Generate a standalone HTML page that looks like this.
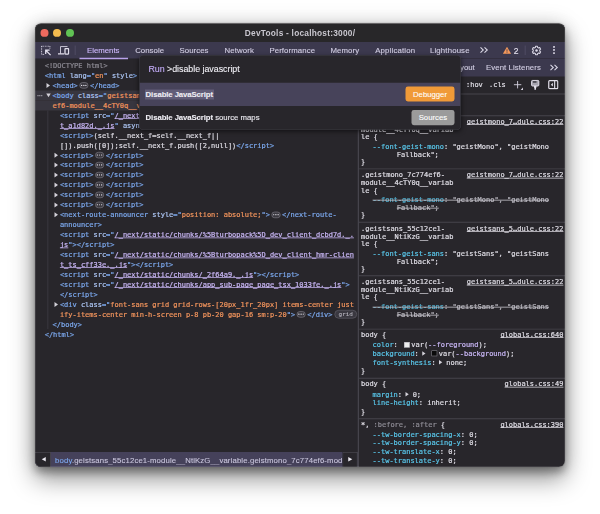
<!DOCTYPE html>
<html lang="en">
<head>
<meta charset="utf-8">
<title>DevTools - localhost:3000/</title>
<style>
html,body{margin:0;padding:0;}
body{width:600px;height:514px;background:#fff;position:relative;overflow:hidden;font-family:"Liberation Sans",sans-serif;}
.shadow{position:absolute;left:35px;top:23.5px;width:530px;height:443.6px;border-radius:6px;
  box-shadow:0 12px 24px 1px rgba(0,0,0,.38),0 5px 8px rgba(0,0,0,.32),0 0 1.5px rgba(0,0,0,.25),0 1px 22px rgba(0,0,0,.15);}
.win{position:absolute;left:35px;top:23.5px;width:530px;height:443.6px;border-radius:6px;overflow:hidden;background:#28262b;}
.abs{position:absolute;}
.win::after{content:"";position:absolute;left:0;top:0;right:0;bottom:0;border-radius:6px;box-shadow:inset 0 0 0 0.5px rgba(255,255,255,.22);pointer-events:none;z-index:10;}
.title{left:0;top:0;width:100%;height:18.5px;background:#282729;}
.title .t{position:absolute;left:0;width:100%;top:4.2px;text-align:center;color:#c9c7cf;font-weight:bold;font-size:8.3px;line-height:10px;letter-spacing:0.243px;}
.tl{position:absolute;top:5.45px;width:7.9px;height:7.9px;border-radius:50%;}
.tabbar{left:0;top:18.5px;width:100%;height:16.4px;background:#3c394e;}
.tab{position:absolute;top:3.7px;font-size:7.8px;line-height:9px;color:#d2cee3;white-space:pre;-webkit-text-stroke:0.12px;}
.mono{font-family:"DejaVu Sans Mono","Liberation Mono",monospace;font-size:6.98px;-webkit-text-stroke:0.22px;}
/* elements tree */
.tree{left:0;top:37.1px;width:322px;}
.row{height:9.95px;line-height:9.95px;position:relative;white-space:pre;}
.tg{color:#7aa6ea;}
.an{color:#a9c1ee;}
.av{color:#f0935c;}
.lk{color:#c6b4f2;text-decoration:underline;text-decoration-skip-ink:none;text-decoration-thickness:0.65px;text-underline-offset:0.45px;}
.tx{color:#dcdae2;}
.gy{color:#8b8992;}
.arr{position:absolute;top:2.5px;width:0;height:0;border-top:2.5px solid transparent;border-bottom:2.5px solid transparent;border-left:3.7px solid #d2d0d8;}
.arrd{position:absolute;top:3.1px;width:0;height:0;border-left:2.4px solid transparent;border-right:2.4px solid transparent;border-top:3.8px solid #d2d0d8;}
.pill{display:inline-block;vertical-align:middle;box-sizing:border-box;width:8.8px;height:6.2px;border-radius:3.1px;background:#3b3940;border:0.6px solid #908e98;margin:0 1.7px;position:relative;top:-0.3px;}
.pill i{position:absolute;top:1.9px;width:1.2px;height:1.2px;border-radius:50%;background:#e8e6ee;}
/* styles */
.sty{color:#dcdae2;}
.sl{position:absolute;line-height:8.14px;height:8.14px;}
.pn{color:#58c3e6;}
.src{color:#dcdae2;text-decoration:underline;text-decoration-skip-ink:none;text-decoration-thickness:0.65px;text-underline-offset:0.45px;}
.sep{position:absolute;left:323px;width:207px;height:0.9px;background:#46444c;margin-top:0.2px;}
.strike{position:absolute;height:0.7px;background:#cfcdd5;}
.st{text-decoration:line-through;text-decoration-color:#cfcdd5;text-decoration-thickness:0.7px;color:#b4b2ba;}
.st .pn{color:#4fa9c8;}
.sl{white-space:pre;}
.vr{color:#c6b4f2;}
.sw{display:inline-block;box-sizing:border-box;width:5.6px;height:5.6px;border:0.6px solid #9a98a2;vertical-align:middle;margin:0 1.6px 0 2.1px;position:relative;top:-0.4px;}
.ex{display:inline-block;width:0;height:0;border-top:2.3px solid transparent;border-bottom:2.3px solid transparent;border-left:3.4px solid #d4d2da;margin-left:-0.8px;margin-right:-0.2px;vertical-align:middle;position:relative;top:-0.4px;}
.gridb{display:inline-block;box-sizing:border-box;vertical-align:middle;margin-left:2px;width:22.4px;text-align:center;height:8.4px;line-height:7.9px;font-size:6px;-webkit-text-stroke:0.05px;border-radius:4.2px;background:#3a3840;border:0.65px solid #6e6c76;color:#bfbdc6;position:relative;top:-0.4px;}
.menu{left:104.6px;top:32px;width:320.8px;height:74px;background:#28262b;border-radius:4px;overflow:hidden;box-shadow:0 0 0 0.5px #45434c,0 1.5px 5px rgba(0,0,0,.6);}
.mi{font-size:7.75px;line-height:9px;color:#efeef4;white-space:pre;-webkit-text-stroke:0.1px;}
.mi b,.mi[style*="bold"]{letter-spacing:-0.085px;}
.badge{height:15.2px;line-height:15.2px;border-radius:2.4px;text-align:center;color:#fff;font-size:7.75px;-webkit-text-stroke:0.1px;}
#sc{position:absolute;left:0;top:0;width:2400px;height:2056px;transform:scale(.25);transform-origin:0 0;}
#zm{zoom:4;position:absolute;left:0;top:0;width:600px;height:514px;}
</style>
</head>
<body>
<div id="sc"><div id="zm">
<div class="shadow"></div>
<div class="win">
  <!-- title bar -->
  <div class="abs title">
    <div class="tl" style="left:5.55px;background:#ee6a5e;"></div>
    <div class="tl" style="left:18.05px;background:#f5bd4f;"></div>
    <div class="tl" style="left:31px;background:#61c354;"></div>
    <div class="t">DevTools - localhost:3000/</div>
  </div>
  <!-- tab bar -->
  <div class="abs tabbar">
    <svg class="abs" style="left:6px;top:3.6px" width="10.5" height="10.5" viewBox="0 0 10.5 10.5"><path d="M0.6 0.6H8.9V3.2M0.6 0.6V8.9H3.2" fill="none" stroke="#dcd9e8" stroke-width="1" stroke-dasharray="0.9 0.75"/><path d="M4.7 8.6V4.7H8.6M4.9 4.9L9.6 9.6" fill="none" stroke="#e4e1ee" stroke-width="1.25"/><path d="M4.7 4.7H7.6L4.7 7.6Z" fill="#e4e1ee" opacity=".55"/></svg>
    <svg class="abs" style="left:22.6px;top:3.7px" width="12" height="10" viewBox="0 0 12 10"><path d="M3 8V0.8H10" fill="none" stroke="#d6d3e2" stroke-width="0.9"/><path d="M0.5 8.1H6.8" stroke="#e0ddea" stroke-width="1.3"/><rect x="7.5" y="2.9" width="3.6" height="5.4" rx="0.5" fill="none" stroke="#e0ddea" stroke-width="1.3"/></svg>
    <div class="abs" style="left:39.8px;top:3.5px;width:0.6px;height:9.5px;background:#55526a;"></div>
    <div class="tab" style="left:52.0px;color:#cdb8fb;">Elements</div>
    <div class="abs" style="left:44.4px;top:15.8px;width:48.6px;height:1.4px;background:#b9a3ea;z-index:3;"></div>
    <div class="tab" style="left:100.2px;letter-spacing:.03px">Console</div>
    <div class="tab" style="left:144.6px;letter-spacing:.05px">Sources</div>
    <div class="tab" style="left:189.4px;letter-spacing:.14px">Network</div>
    <div class="tab" style="left:234.4px;letter-spacing:.1px">Performance</div>
    <div class="tab" style="left:295.5px;letter-spacing:.09px">Memory</div>
    <div class="tab" style="left:340.2px;letter-spacing:.17px">Application</div>
    <div class="tab" style="left:395.0px;letter-spacing:.15px">Lighthouse</div>
    <svg class="abs" style="left:444.6px;top:4.6px" width="9" height="7" viewBox="0 0 9 7"><path d="M1 0.8L3.8 3.5L1 6.2M5 0.8L7.8 3.5L5 6.2" fill="none" stroke="#dcd9e8" stroke-width="1.05"/></svg>
    <svg class="abs" style="left:467.6px;top:4.3px" width="9" height="8" viewBox="0 0 9 8"><path d="M4.5 0.5L8.6 7.5H0.4Z" fill="#f4985a"/><rect x="4.1" y="3" width="0.8" height="2.4" fill="#3c394e"/><rect x="4.1" y="6" width="0.8" height="0.8" fill="#3c394e"/></svg>
    <div class="tab" style="left:478.8px;top:4.3px;color:#e8e5f2;font-size:8.5px;">2</div>
    <div class="abs" style="left:489.8px;top:3.5px;width:0.6px;height:9.5px;background:#55526a;"></div>
    <svg class="abs" style="left:495.9px;top:2.9px" width="11" height="11" viewBox="0 0 11 11"><path d="M4.43 2.38L4.60 1.25L6.40 1.25L6.57 2.38L7.66 3.01L8.73 2.59L9.64 4.16L8.74 4.87L8.74 6.13L9.64 6.84L8.73 8.41L7.66 7.99L6.57 8.62L6.40 9.75L4.60 9.75L4.43 8.62L3.34 7.99L2.27 8.41L1.36 6.84L2.26 6.13L2.26 4.87L1.36 4.16L2.27 2.59L3.34 3.01Z" fill="none" stroke="#dedbe9" stroke-width="1.05" stroke-linejoin="round"/><circle cx="5.5" cy="5.5" r="1.25" fill="#dedbe9"/></svg>
    <div class="abs" style="left:518.1px;top:3.9px;width:1.8px;height:1.8px;border-radius:50%;background:#e0ddea;box-shadow:0 3.1px 0 #e0ddea,0 6.2px 0 #e0ddea;"></div>
  </div>
  <div class="abs" style="left:0;top:34.9px;width:100%;height:0.6px;background:#2f2d3a;"></div>
  <div class="abs" style="left:12.6px;top:87px;width:0.7px;height:218.5px;background:#3f3d46;"></div>
  <!-- elements tree -->
  <div class="abs tree mono">
    <div class="row" style="padding-left:9.7px;"><span class="gy">&lt;!DOCTYPE html&gt;</span></div>
    <div class="row" style="padding-left:9.7px;"><span class="tg">&lt;html</span> <span class="an">lang</span><span class="tg">="</span><span class="av">en</span><span class="tg">"</span> <span class="an">style</span><span class="tg">&gt;</span></div>
    <div class="row" style="padding-left:17.6px;"><span class="arr" style="left:11.6px"></span><span class="tg">&lt;head&gt;</span><span class="pill"><i style="left:1.05px"></i><i style="left:3.2px"></i><i style="left:5.35px"></i></span><span class="tg">&lt;/head&gt;</span></div>
    <div class="row" style="padding-left:17.6px;background:#38363f;"><span class="abs" style="left:2.4px;top:4.5px;width:1.2px;height:1.2px;border-radius:50%;background:#cccad4;box-shadow:1.9px 0 0 #cccad4,3.8px 0 0 #cccad4;"></span><span class="arrd" style="left:11.2px"></span><span class="tg">&lt;body</span> <span class="an">class</span><span class="tg">="</span><span class="av">geistsans_55c12ce1-module__NtiKzG__variable geistmono_7c774</span></div>
    <div class="row" style="padding-left:17.6px;background:#38363f;"><span class="av">ef6-module__4cTY0q__variable antialiased</span><span class="tg">"&gt;</span> <span class="gy">== $0</span></div>
    <div class="row" style="padding-left:24.9px;"><span class="tg">&lt;script</span> <span class="an">src</span><span class="tg">="</span><span class="lk">/_next/static/chunks/%5Bturbopack%5D_browser_dev_hmr-clien</span></div>
    <div class="row" style="padding-left:24.9px;"><span class="lk">t_a1d82d._.js</span><span class="tg">"</span> <span class="an">async</span><span class="tg">&gt;&lt;/script&gt;</span></div>
    <div class="row" style="padding-left:24.9px;"><span class="tg">&lt;script&gt;</span><span class="tx">(self.__next_f=self.__next_f||</span></div>
    <div class="row" style="padding-left:24.9px;"><span class="tx">[]).push([0]);self.__next_f.push([2,null])</span><span class="tg">&lt;/script&gt;</span></div>
    <div class="row" style="padding-left:24.9px;"><span class="arr" style="left:19.4px"></span><span class="tg">&lt;script&gt;</span><span class="pill"><i style="left:1.05px"></i><i style="left:3.2px"></i><i style="left:5.35px"></i></span><span class="tg">&lt;/script&gt;</span></div>
    <div class="row" style="padding-left:24.9px;"><span class="arr" style="left:19.4px"></span><span class="tg">&lt;script&gt;</span><span class="pill"><i style="left:1.05px"></i><i style="left:3.2px"></i><i style="left:5.35px"></i></span><span class="tg">&lt;/script&gt;</span></div>
    <div class="row" style="padding-left:24.9px;"><span class="arr" style="left:19.4px"></span><span class="tg">&lt;script&gt;</span><span class="pill"><i style="left:1.05px"></i><i style="left:3.2px"></i><i style="left:5.35px"></i></span><span class="tg">&lt;/script&gt;</span></div>
    <div class="row" style="padding-left:24.9px;"><span class="arr" style="left:19.4px"></span><span class="tg">&lt;script&gt;</span><span class="pill"><i style="left:1.05px"></i><i style="left:3.2px"></i><i style="left:5.35px"></i></span><span class="tg">&lt;/script&gt;</span></div>
    <div class="row" style="padding-left:24.9px;"><span class="arr" style="left:19.4px"></span><span class="tg">&lt;script&gt;</span><span class="pill"><i style="left:1.05px"></i><i style="left:3.2px"></i><i style="left:5.35px"></i></span><span class="tg">&lt;/script&gt;</span></div>
    <div class="row" style="padding-left:24.9px;"><span class="arr" style="left:19.4px"></span><span class="tg">&lt;script&gt;</span><span class="pill"><i style="left:1.05px"></i><i style="left:3.2px"></i><i style="left:5.35px"></i></span><span class="tg">&lt;/script&gt;</span></div>
    <div class="row" style="padding-left:24.9px;"><span class="arr" style="left:19.4px"></span><span class="tg">&lt;next-route-announcer</span> <span class="an">style</span><span class="tg">="</span><span class="av">position: absolute;</span><span class="tg">"&gt;</span><span class="pill"><i style="left:1.05px"></i><i style="left:3.2px"></i><i style="left:5.35px"></i></span><span class="tg">&lt;/next-route-</span></div>
    <div class="row" style="padding-left:24.9px;"><span class="tg">announcer&gt;</span></div>
    <div class="row" style="padding-left:24.9px;"><span class="tg">&lt;script</span> <span class="an">src</span><span class="tg">="</span><span class="lk">/_next/static/chunks/%5Bturbopack%5D_dev_client_dcbd7d._.</span></div>
    <div class="row" style="padding-left:24.9px;"><span class="lk">js</span><span class="tg">"&gt;&lt;/script&gt;</span></div>
    <div class="row" style="padding-left:24.9px;"><span class="tg">&lt;script</span> <span class="an">src</span><span class="tg">="</span><span class="lk">/_next/static/chunks/%5Bturbopack%5D_dev_client_hmr-clien</span></div>
    <div class="row" style="padding-left:24.9px;"><span class="lk">t_ts_cff33e._.js</span><span class="tg">"&gt;&lt;/script&gt;</span></div>
    <div class="row" style="padding-left:24.9px;"><span class="tg">&lt;script</span> <span class="an">src</span><span class="tg">="</span><span class="lk">/_next/static/chunks/_2f64a9._.js</span><span class="tg">"&gt;&lt;/script&gt;</span></div>
    <div class="row" style="padding-left:24.9px;"><span class="tg">&lt;script</span> <span class="an">src</span><span class="tg">="</span><span class="lk">/_next/static/chunks/app_sub-page_page_tsx_1033fe._.js</span><span class="tg">"&gt;</span></div>
    <div class="row" style="padding-left:24.9px;"><span class="tg">&lt;/script&gt;</span></div>
    <div class="row" style="padding-left:24.9px;"><span class="arr" style="left:19.4px"></span><span class="tg">&lt;div</span> <span class="an">class</span><span class="tg">="</span><span class="av">font-sans grid grid-rows-[20px_1fr_20px] items-center just</span></div>
    <div class="row" style="padding-left:24.9px;"><span class="av">ify-items-center min-h-screen p-8 pb-20 gap-16 sm:p-20</span><span class="tg">"&gt;</span><span class="pill"><i style="left:1.05px"></i><i style="left:3.2px"></i><i style="left:5.35px"></i></span><span class="tg">&lt;/div&gt;</span><span class="gridb">grid</span></div>
    <div class="row" style="padding-left:17.6px;"><span class="tg">&lt;/body&gt;</span></div>
    <div class="row" style="padding-left:9.7px;"><span class="tg">&lt;/html&gt;</span></div>
  </div>
  <!-- right: styles pane -->
  <div class="abs" style="left:322.8px;top:35px;width:1.1px;height:410px;background:#46444c;"></div>
  <div class="abs" style="left:323px;top:35.2px;width:207px;height:17.7px;background:#3c394e;"></div>
  <div class="tab" style="left:425px;top:39.8px;">yout</div>
  <div class="tab" style="left:451px;top:39.8px;letter-spacing:.08px">Event Listeners</div>
  <svg class="abs" style="left:514.6px;top:40.6px" width="9" height="7" viewBox="0 0 9 7"><path d="M1 0.8L3.8 3.5L1 6.2M5 0.8L7.8 3.5L5 6.2" fill="none" stroke="#dcd9e8" stroke-width="1.05"/></svg>
  <div class="abs mono" style="left:431px;top:57.4px;line-height:8.14px;color:#dcdae2;white-space:pre;">:hov</div>
  <div class="abs mono" style="left:454px;top:57.4px;line-height:8.14px;color:#dcdae2;white-space:pre;">.cls</div>
  <svg class="abs" style="left:478px;top:56.5px" width="11" height="11" viewBox="0 0 11 11"><path d="M4.6 1V8.4M0.9 4.7H8.3" fill="none" stroke="#d6d3e2" stroke-width="0.9"/><path d="M10 7.6V10H7.6Z" fill="#d6d3e2"/></svg>
  <svg class="abs" style="left:495.6px;top:56px" width="10" height="11" viewBox="0 0 10 11"><rect x="1.1" y="0.9" width="7.2" height="5.6" rx="0.9" fill="#a5a3ae" stroke="#e2dfea" stroke-width="1"/><rect x="2.4" y="1.7" width="3.6" height="1.5" fill="#3a3840"/><path d="M3.5 6.5H5.9V8.2H5.5V10.2H3.9V8.2H3.5Z" fill="#e2dfea"/></svg>
  <svg class="abs" style="left:512.8px;top:56.2px" width="11" height="10" viewBox="0 0 11 10"><rect x="1" y="0.9" width="9" height="8" rx="0.9" fill="none" stroke="#e2dfea" stroke-width="1.2"/><path d="M6.9 0.9V8.9" stroke="#e2dfea" stroke-width="1.1"/><path d="M5.1 3.1V6.7L3.1 4.9Z" fill="#e2dfea"/></svg>
  <div class="sep" style="top:69.9px"></div>
  <div class="mono">
    <div class="sep" style="top:91.55px"></div>
    <div class="sl sty" style="left:326.0px;top:93.93px">.geistmono_7c774ef6-</div>
    <div class="sl src" style="right:1.6px;top:93.93px">geistmono_7…dule.css:22</div>
    <div class="sl sty" style="left:326.0px;top:101.93px">module__4cTY0q__variab</div>
    <div class="sl sty" style="left:326.0px;top:109.13px">le {</div>
    <div class="sl sty" style="left:337.6px;top:118.93px"><span class="pn">--font-geist-mono</span>: "geistMono", "geistMono</div>
    <div class="sl sty" style="left:361.8px;top:126.93px">Fallback";</div>
    <div class="sl sty" style="left:326.0px;top:133.63px">}</div>
    <div class="sep" style="top:144.75px"></div>
    <div class="sl sty" style="left:326.0px;top:147.43px">.geistmono_7c774ef6-</div>
    <div class="sl src" style="right:1.6px;top:147.43px">geistmono_7…dule.css:22</div>
    <div class="sl sty" style="left:326.0px;top:155.43px">module__4cTY0q__variab</div>
    <div class="sl sty" style="left:326.0px;top:162.63px">le {</div>
    <div class="sl sty" style="left:337.6px;top:172.43px"><span class="st"><span class="pn">--font-geist-mono</span>: "geistMono", "geistMono</span></div>
    <div class="sl sty" style="left:361.8px;top:180.43px"><span class="st">Fallback";</span></div>
    <div class="sl sty" style="left:326.0px;top:187.13px">}</div>
    <div class="sep" style="top:198.15px"></div>
    <div class="sl sty" style="left:326.0px;top:200.93px">.geistsans_55c12ce1-</div>
    <div class="sl src" style="right:1.6px;top:200.93px">geistsans_5…dule.css:22</div>
    <div class="sl sty" style="left:326.0px;top:208.93px">module__NtiKzG__variab</div>
    <div class="sl sty" style="left:326.0px;top:216.13px">le {</div>
    <div class="sl sty" style="left:337.6px;top:225.93px"><span class="pn">--font-geist-sans</span>: "geistSans", "geistSans</div>
    <div class="sl sty" style="left:361.8px;top:233.93px">Fallback";</div>
    <div class="sl sty" style="left:326.0px;top:240.63px">}</div>
    <div class="sep" style="top:251.65px"></div>
    <div class="sl sty" style="left:326.0px;top:254.43px">.geistsans_55c12ce1-</div>
    <div class="sl src" style="right:1.6px;top:254.43px">geistsans_5…dule.css:22</div>
    <div class="sl sty" style="left:326.0px;top:262.43px">module__NtiKzG__variab</div>
    <div class="sl sty" style="left:326.0px;top:268.93px">le {</div>
    <div class="sl sty" style="left:337.6px;top:279.43px"><span class="st"><span class="pn">--font-geist-sans</span>: "geistSans", "geistSans</span></div>
    <div class="sl sty" style="left:361.8px;top:287.43px"><span class="st">Fallback";</span></div>
    <div class="sl sty" style="left:326.0px;top:294.13px">}</div>
    <div class="sep" style="top:304.95px"></div>
    <div class="sl sty" style="left:326.0px;top:307.03px">body {</div>
    <div class="sl src" style="right:1.6px;top:307.03px">globals.css:640</div>
    <div class="sl sty" style="left:337.6px;top:317.43px"><span class="pn">color</span>: <span class="sw" style="background:#ededed"></span>var(<span class="vr">--foreground</span>);</div>
    <div class="sl sty" style="left:337.6px;top:326.03px"><span class="pn">background</span>: <span class="ex"></span> <span class="sw" style="background:#0a0a0a"></span>var(<span class="vr">--background</span>);</div>
    <div class="sl sty" style="left:337.6px;top:334.83px"><span class="pn">font-synthesis</span>: <span class="ex"></span> none;</div>
    <div class="sl sty" style="left:326.0px;top:343.43px">}</div>
    <div class="sep" style="top:354.15px"></div>
    <div class="sl sty" style="left:326.0px;top:356.43px">body {</div>
    <div class="sl src" style="right:1.6px;top:356.43px">globals.css:49</div>
    <div class="sl sty" style="left:337.6px;top:366.83px"><span class="pn">margin</span>: <span class="ex"></span> 0;</div>
    <div class="sl sty" style="left:337.6px;top:375.43px"><span class="pn">line-height</span>: inherit;</div>
    <div class="sl sty" style="left:326.0px;top:383.83px">}</div>
    <div class="sep" style="top:394.55px"></div>
    <div class="sl sty" style="left:326.0px;top:397.03px">*, <span class="gy">:before, :after</span> {</div>
    <div class="sl src" style="right:1.6px;top:397.03px">globals.css:390</div>
    <div class="sl sty" style="left:337.6px;top:406.83px"><span class="pn">--tw-border-spacing-x</span>: 0;</div>
    <div class="sl sty" style="left:337.6px;top:415.43px"><span class="pn">--tw-border-spacing-y</span>: 0;</div>
    <div class="sl sty" style="left:337.6px;top:424.43px"><span class="pn">--tw-translate-x</span>: 0;</div>
    <div class="sl sty" style="left:337.6px;top:433.03px"><span class="pn">--tw-translate-y</span>: 0;</div>
  </div>
  <!-- breadcrumbs -->
  <div class="abs" style="left:0;top:428.4px;width:322.4px;height:16px;background:#45415a;"></div>
  <div class="abs" style="left:0;top:428.4px;width:15.8px;height:16px;background:#28262b;box-shadow:inset -0.6px 0.6px 0 0 #55535d;"></div>
  <div class="abs" style="left:6.7px;top:433.5px;width:0;height:0;border-top:2.35px solid transparent;border-bottom:2.35px solid transparent;border-right:4px solid #eceaf2;"></div>
  <div class="abs" style="left:20.1px;top:432.2px;font-size:7.75px;line-height:9px;color:#cbc7de;white-space:pre;width:287px;overflow:hidden;letter-spacing:.137px;-webkit-text-stroke:0.1px;"><span style="color:#7eaaf2">body</span>.geistsans_55c12ce1-module__NtiKzG__variable.geistmono_7c774ef6-module__4cTY0q__variable.antialiased</div>
  <div class="abs" style="left:307.4px;top:428.4px;width:15px;height:16px;background:#28262b;box-shadow:inset 0 0 0 0.6px #55535c;"></div>
  <div class="abs" style="left:313.2px;top:433.5px;width:0;height:0;border-top:2.35px solid transparent;border-bottom:2.35px solid transparent;border-left:4px solid #eceaf2;"></div>
  <!-- command menu -->
  <div class="abs menu">
    <div class="abs" style="left:8.8px;top:8.3px;font-size:8.9px;line-height:11px;white-space:pre;color:#efeef4;letter-spacing:-0.04px;-webkit-text-stroke:0.1px;"><span style="color:#c4acf8">Run</span> &gt;disable javascript</div>
    <div class="abs" style="left:0;top:27.2px;width:100%;height:23.4px;background:#47435a;"></div>
    <div class="abs" style="left:5.4px;top:34.1px;height:9.4px;width:68.6px;background:#625d78;"></div>
    <div class="abs mi" style="left:6px;top:34.3px;font-weight:bold;">Disable JavaScript</div>
    <div class="abs mi" style="left:6px;top:57.7px;"><b>Disable JavaScript</b> source maps</div>
    <div class="abs badge" style="left:266px;top:30.9px;width:48.8px;background:#f09a38;">Debugger</div>
    <div class="abs badge" style="left:271.8px;top:54.5px;width:43px;background:#9b9b9b;">Sources</div>
  </div>
</div>
</div></div>
</body>
</html>
